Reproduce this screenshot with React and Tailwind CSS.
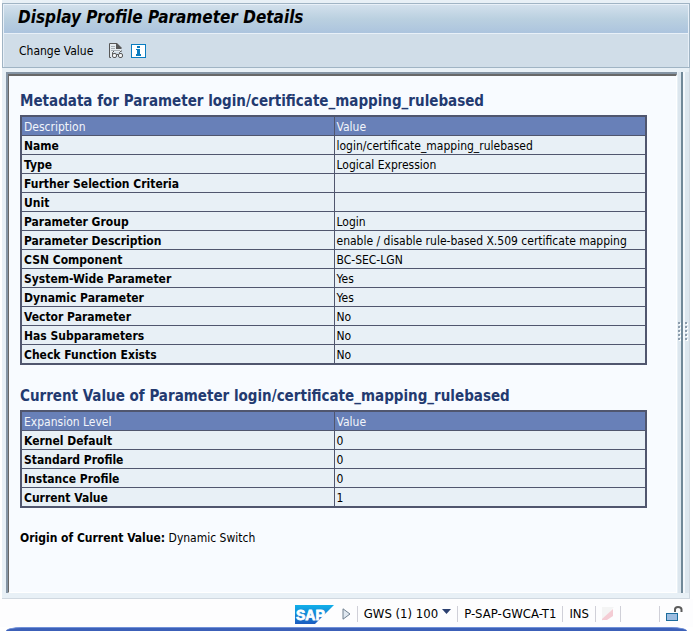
const FONT = "font-['DejaVu_Sans_Condensed','DejaVu_Sans',sans-serif]";

const metadata = [
  ["Name", "login/certificate_mapping_rulebased"],
  ["Type", "Logical Expression"],
  ["Further Selection Criteria", ""],
  ["Unit", ""],
  ["Parameter Group", "Login"],
  ["Parameter Description", "enable / disable rule-based X.509 certificate mapping"],
  ["CSN Component", "BC-SEC-LGN"],
  ["System-Wide Parameter", "Yes"],
  ["Dynamic Parameter", "Yes"],
  ["Vector Parameter", "No"],
  ["Has Subparameters", "No"],
  ["Check Function Exists", "No"],
];

const levels = [
  ["Kernel Default", "0"],
  ["Standard Profile", "0"],
  ["Instance Profile", "0"],
  ["Current Value", "1"],
];

function ParamTable({ title, head, rows }) {
  return (
    <section>
      <h2 className="text-[15px] leading-5 font-bold text-[#233a70] whitespace-nowrap">{title}</h2>
      <table className="mt-1 w-full table-fixed border-separate border-spacing-0 border-2 border-[#50566e] bg-[#e8f0f6] text-xs">
        <thead>
          <tr className="h-[19px] bg-[#6880b8] text-[#f2f5fb]">
            <th scope="col" className="w-1/2 border-b border-[#50566e] px-0.5 pt-0.5 pb-0 text-left leading-4 font-normal">{head}</th>
            <th scope="col" className="border-b border-l border-[#50566e] px-0.5 pt-0.5 pb-0 text-left leading-4 font-normal">Value</th>
          </tr>
        </thead>
        <tbody>
          {rows.map(([name, value]) => (
            <tr key={name} className="group h-[19px] last:h-[18px]">
              <th scope="row" className="border-b border-[#50566e] px-0.5 pt-0.5 pb-0 text-left leading-4 font-bold whitespace-nowrap group-last:border-b-0">{name}</th>
              <td className="border-b border-l border-[#50566e] px-0.5 pt-0.5 pb-0 leading-4 whitespace-nowrap group-last:border-b-0">{value}</td>
            </tr>
          ))}
        </tbody>
      </table>
    </section>
  );
}

function DocGlassesIcon() {
  return (
    <svg width="15" height="16" viewBox="0 0 15 16" fill="none" stroke="#585858">
      <path d="M0 0h8l4 4v5H4l-2 6H0z" fill="#e6ecf0" stroke="none" />
      <path d="M2 14.500H.5V.5H8" />
      <path d="M7 0h1l4.500 4.500V6H7z" fill="#585858" stroke="none" />
      <path d="M2 3.500h4M2 5.500h4M2 7.500h9" stroke="#a8b0b6" />
      <path d="M3.500 12V9.500L5 8M10.500 12V9.500L12 8h1" />
      <rect x="3.500" y="10.500" width="4" height="4" rx="1.500" fill="#f4f6f8" />
      <rect x="9.500" y="10.500" width="4" height="4" rx="1.500" fill="#f4f6f8" />
      <path d="M7.500 11.500h2" />
    </svg>
  );
}

function InfoIcon() {
  return (
    <svg width="15" height="14" viewBox="0 0 15 14">
      <rect x=".5" y=".5" width="14" height="13" fill="#fff" stroke="#0a7cc0" />
      <path d="M6 2h3v2H6zM5 5h4v5h1v2H5v-2h1V6H5z" fill="#0a7cc0" />
    </svg>
  );
}

function SapLogo() {
  return (
    <svg width="39" height="19" viewBox="0 0 39 19" role="img" aria-label="SAP">
      <defs>
        <linearGradient id="sap" x1="0" y1="0" x2="0" y2="1">
          <stop offset="0" stopColor="#10b0ea" />
          <stop offset="1" stopColor="#1c5cc0" />
        </linearGradient>
      </defs>
      <path d="M0 0h39L20 19H0z" fill="url(#sap)" />
      <text x="1" y="15" fontSize="14" fontWeight="bold" fill="#fff" stroke="#fff" strokeWidth=".8" fontFamily="Liberation Sans, sans-serif">SAP</text>
    </svg>
  );
}

function LockIcon() {
  return (
    <svg width="17" height="16" viewBox="0 0 17 16" fill="none">
      <path d="M9 6V3.500C9 1.500 10 1 12 1s3.500.5 3.500 2.500V6" stroke="#5c5c5c" strokeWidth="2" />
      <rect x=".5" y="7.500" width="11" height="7" fill="#9cbce0" stroke="#1c6c9c" />
    </svg>
  );
}

function Grip() {
  return (
    <div className="flex flex-col gap-0.5 pb-1">
      {[0, 1, 2, 3, 4].map((i) => (
        <span key={i} className="size-0.5 bg-[#8c9cac] shadow-[1px_1px_0_#fff]" />
      ))}
    </div>
  );
}

const Divider = () => <span className="h-4 w-px bg-[#d0d0d8]" />;

export default function App() {
  return (
    <div className={`flex min-h-screen flex-col bg-white text-xs text-black ${FONT}`}>
      <div className="mr-[3px] ml-0.5 flex flex-1 flex-col border-b border-[#d0d8e0] bg-[#e8f0f6] pt-[3px]">
        <header className="border border-[#a0b4c4] bg-[#d0dde8]">
          <div className="h-[30px] border border-[#e8f0f8] bg-linear-to-b from-[#d2e0ec] via-[#bad0e0] to-[#acc4de] pl-3.5">
            <h1 className="text-[17px] leading-6 font-bold italic whitespace-nowrap">Display Profile Parameter Details</h1>
          </div>
          <div className="flex h-[33px] items-center border-x border-[#e8f0f8] pl-[15px]">
            <button type="button">Change Value</button>
            <button type="button" aria-label="Display documentation" className="ml-4"><DocGlassesIcon /></button>
            <button type="button" aria-label="Information" className="ml-[7px]"><InfoIcon /></button>
          </div>
        </header>

        <div className="flex flex-1 border-r border-[#d0d8e0] pt-1 pb-[5px] pl-1">
          <main className="flex-1 border-t-2 border-l-2 border-[#8494a4]">
            <div className="h-full border-t-2 border-r border-b border-l border-t-[#686868] border-r-white border-b-white border-l-[#686868] bg-[#f8fbff] pt-[15px] pr-[29px] pb-10 pl-[11px]">
              <ParamTable title="Metadata for Parameter login/certificate_mapping_rulebased" head="Description" rows={metadata} />
              <div className="h-[21px]" />
              <ParamTable title="Current Value of Parameter login/certificate_mapping_rulebased" head="Expansion Level" rows={levels} />
              <p className="mt-[21px] leading-[18px]"><b>Origin of Current Value:</b> Dynamic Switch</p>
            </div>
          </main>
          <div className="ml-px flex items-center bg-[#dce6ee]" role="separator" aria-orientation="vertical">
            <Grip />
            <span className="ml-px h-full w-0.5 bg-[#708898]" />
            <span className="h-full w-0.5 bg-[#f4f8fc]" />
            <Grip />
            <span className="w-0.5" />
          </div>
        </div>
      </div>

      <footer className="flex h-7 items-center justify-end gap-1.5 bg-[#fdfdfe] pt-0.5 pr-2.5 text-[13px] whitespace-nowrap">
        <SapLogo />
        <button type="button" aria-label="Expand" className="ml-0.5">
          <svg width="9" height="12" viewBox="0 0 9 12"><path d="M1 .8v10.400l7-5.200z" fill="#e0e8f0" stroke="#708090" /></svg>
        </button>
        <Divider />
        <button type="button" className="flex items-center gap-1">
          GWS (1) 100
          <svg width="9" height="5" viewBox="0 0 9 5" className="-mt-1"><path d="M0 0h9L4.500 5z" fill="#2c4070" /></svg>
        </button>
        <Divider />
        <span>P-SAP-GWCA-T1</span>
        <Divider />
        <span>INS</span>
        <Divider />
        <svg width="12" height="14" viewBox="0 0 12 14"><path d="M0 14V0h12z" fill="#f4f4f4" /><path d="M0 12L11 2v7l-6 4H0z" fill="#f4ccd4" /></svg>
        <Divider />
        <span className="w-[26px]" />
        <Divider />
        <LockIcon />
      </footer>
      <div className="mx-1.5 h-1 rounded-t-[16px_4px] border-t border-[#7090d8] bg-[#3c60b8]" />
    </div>
  );
}
